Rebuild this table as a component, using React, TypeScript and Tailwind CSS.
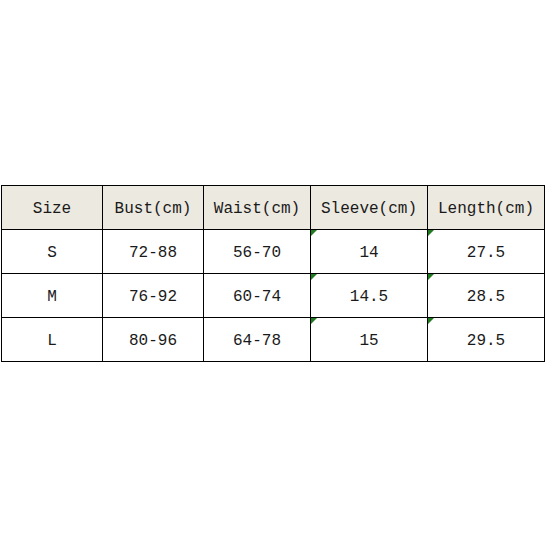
import React from "react";

const headers = ["Size", "Bust(cm)", "Waist(cm)", "Sleeve(cm)", "Length(cm)"];
const rows = [
  ["S", "72-88", "56-70", "14", "27.5"],
  ["M", "76-92", "60-74", "14.5", "28.5"],
  ["L", "80-96", "64-78", "15", "29.5"],
];

function Tri() {
  return (
    <svg className="absolute left-0 top-0" width="7" height="7" viewBox="0 0 7 7">
      <polygon points="0,0 6,0 0,6" fill="#1e7b1e" />
    </svg>
  );
}

export default function App() {
  return (
    <div className="w-[548px] h-[548px] bg-white pt-[185px] pl-[1px]" style={{ fontFamily: '"Liberation Mono", monospace' }}>
      <div className="grid grid-cols-[101px_101px_107px_117px_117px] w-fit border-l border-t border-black text-[16px] text-[#1a1a1a]">
        {headers.map((h) => (
          <div key={h} className="h-[44px] pt-[3px] bg-[#ece9e0] border-r border-b border-black flex items-center justify-center">
            {h}
          </div>
        ))}
        {rows.map((r) =>
          r.map((c, i) => (
            <div key={r[0] + i} className="relative h-[44px] pt-[3px] bg-white border-r border-b border-black flex items-center justify-center">
              {i >= 3 && <Tri />}
              {c}
            </div>
          ))
        )}
      </div>
    </div>
  );
}
